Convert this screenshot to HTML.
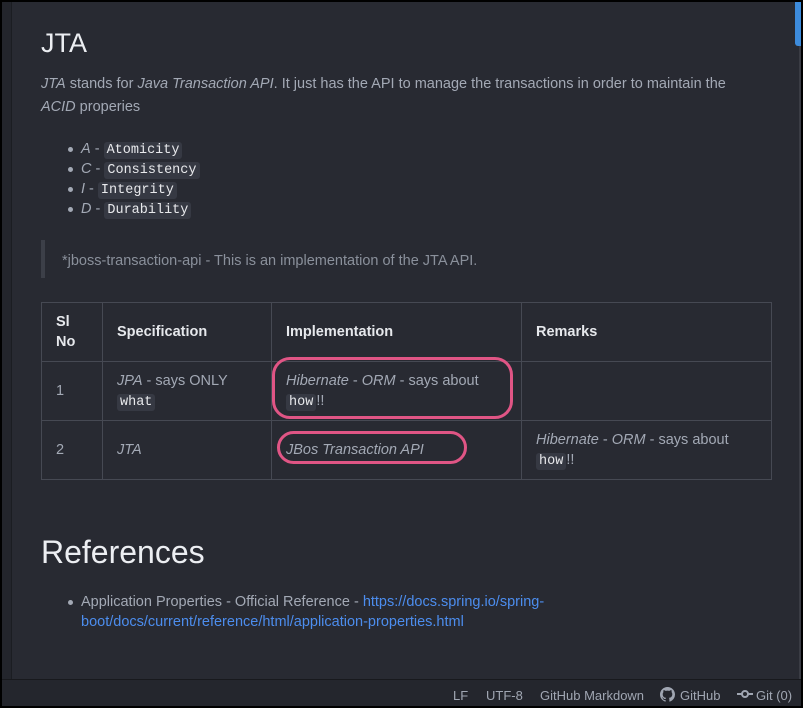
<!DOCTYPE html>
<html><head><style>
*{margin:0;padding:0;box-sizing:border-box}
body{width:803px;height:708px;background:#000;overflow:hidden;font-family:"Liberation Sans",sans-serif;position:relative}
.frame{position:absolute;left:2px;top:2px;width:799px;height:704px;background:#282a32}
.gut{position:absolute;left:0;top:0;width:10px;height:677px;background:#23252c;border-right:1px solid #1b1d22}
.sb{position:absolute;left:793px;top:0;width:6px;height:44px;background:#3d8bdb;border-radius:0 0 0 3px}
.sbt{position:absolute;left:797px;top:44px;width:2px;height:633px;background:#3a3c44}
.status{position:absolute;left:0;top:677px;width:799px;height:27px;background:#24262d;border-top:1px solid #18191d;color:#a0a6b2;font-size:13px}
.status span{position:absolute;top:8px}
.c{position:absolute;left:39px;top:0;width:740px;color:#a3a9b5;font-size:14.5px}
h1{position:absolute;color:#eceef2;font-weight:normal}
code{font-family:"Liberation Mono",monospace;background:#363943;color:#e8e9ec;padding:1px 3px;border-radius:3px;font-size:13.5px;line-height:16px}
i{font-style:italic}
ul{list-style:none}
li{position:relative;height:20px}
li:before{content:"";position:absolute;left:-13px;top:8px;width:5px;height:5px;border-radius:50%;background:#a3a9b5}
table{position:absolute;left:0;top:300px;border-collapse:collapse;width:731px;table-layout:fixed}
td,th{border:1px solid #464953;text-align:left;padding:0 14px;vertical-align:middle}
th{color:#e6e8ec;height:59px;font-weight:bold}
td{height:59px;line-height:20px}
.ov{position:absolute;border:3px solid #e05585;border-radius:18px}
a{color:#4c8dee;text-decoration:none}
</style></head><body>
<div class="frame">
<div class="gut"></div>
<div class="sbt"></div><div class="sb"></div>
<div class="c">
<h1 style="top:26px;font-size:27px">JTA</h1>
<p style="position:absolute;top:71px;line-height:23px;width:720px"><i>JTA</i> stands for <i>Java Transaction API</i>. It just has the API to manage the transactions in order to maintain the <i>ACID</i> properies</p>
<ul style="position:absolute;top:137px;left:40px;line-height:20px">
<li><i>A</i> - <code>Atomicity</code></li>
<li><i>C</i> - <code>Consistency</code></li>
<li><i>I</i> - <code>Integrity</code></li>
<li><i>D</i> - <code>Durability</code></li>
</ul>
<div style="position:absolute;top:238px;left:0;width:4px;height:38px;background:#3c3f48"></div>
<p style="position:absolute;top:251px;left:21px;color:#8a909b">*jboss-transaction-api - This is an implementation of the JTA API.</p>
<table>
<col style="width:61px"><col style="width:169px"><col style="width:250px"><col>
<tr><th style="line-height:20px">Sl<br>No</th><th>Specification</th><th>Implementation</th><th>Remarks</th></tr>
<tr><td>1</td><td><i>JPA</i> - says ONLY<br><code>what</code></td><td><i>Hibernate</i> - <i>ORM</i> - says about<br><code>how</code>!!</td><td></td></tr>
<tr><td>2</td><td><i>JTA</i></td><td><i>JBos Transaction API</i></td><td><i>Hibernate</i> - <i>ORM</i> - says about<br><code>how</code>!!</td></tr>
</table>
<div class="ov" style="left:231px;top:355px;width:241px;height:62px"></div>
<div class="ov" style="left:236px;top:429px;width:190px;height:33px"></div>
<h1 style="top:532px;font-size:32px">References</h1>
<ul style="position:absolute;top:590px;left:40px;line-height:20px">
<li style="height:40px">Application Properties - Official Reference - <a>https://docs.spring.io/spring-<br>boot/docs/current/reference/html/application-properties.html</a></li>
</ul>
</div>
<div class="status">
<span style="left:451px">LF</span>
<span style="left:484px">UTF-8</span>
<span style="left:538px">GitHub Markdown</span>
<svg style="position:absolute;left:658px;top:7px" width="15" height="15" viewBox="0 0 16 16"><path fill="#a0a6b2" d="M8 0C3.58 0 0 3.58 0 8c0 3.540 2.29 6.53 5.47 7.59.4.07.55-.17.55-.38v-1.33c-2.230.48-2.7-1.07-2.7-1.07-.36-.92-.89-1.17-.89-1.17-.73-.5.05-.49.05-.49.8.06 1.23.83 1.23.83.71 1.22 1.87.87 2.33.66.07-.52.28-.87.5-1.07-1.78-.2-3.64-.89-3.64-3.95 0-.87.31-1.59.82-2.15-.08-.2-.36-1.02.08-2.12 0 0 .67-.21 2.2.82a7.6 7.6 0 0 1 4 0c1.530-1.04 2.2-.82 2.2-.82.44 1.1.16 1.92.08 2.12.51.56.82 1.27.82 2.15 0 3.07-1.87 3.75-3.65 3.95.29.25.54.73.54 1.48v2.2c0 .21.15.46.55.38A8 8 0 0 0 16 8c0-4.420-3.58-8-8-8z"/></svg>
<span style="left:678px">GitHub</span>
<svg style="position:absolute;left:735px;top:9px" width="16" height="10" viewBox="0 0 16 10"><circle cx="8" cy="5" r="3" fill="none" stroke="#a0a6b2" stroke-width="2"/><path d="M0 5h5M11 5h5" stroke="#a0a6b2" stroke-width="2"/></svg>
<span style="left:754px">Git (0)</span>
</div>
</div>
</body></html>
